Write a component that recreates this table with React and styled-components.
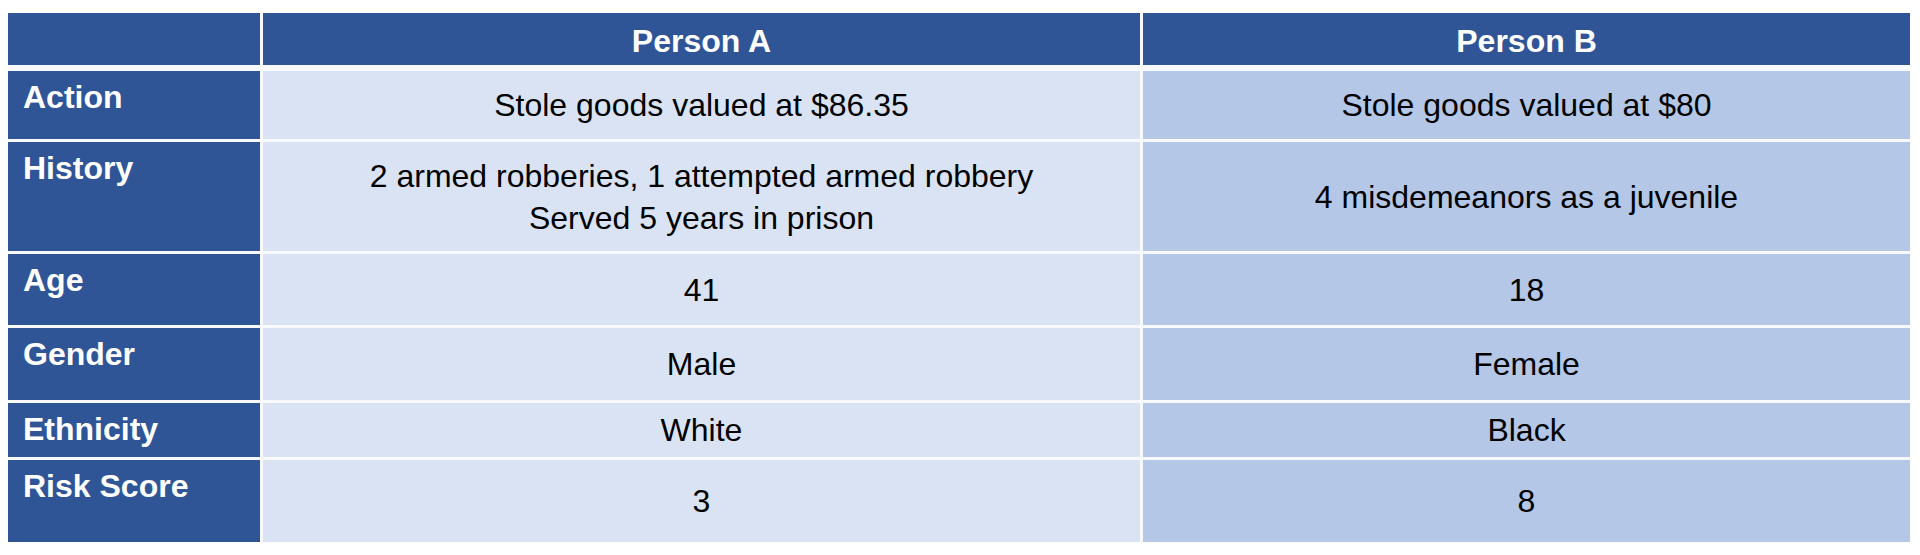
import React from "react";
import styled, { createGlobalStyle } from "styled-components";

const Global = createGlobalStyle`
  html, body { margin: 0; padding: 0; background: #ffffff; }
  body { font-family: "Liberation Sans", Arial, Helvetica, sans-serif; }
`;

const Page = styled.div`
  padding: 13px 10px 13px 8px;
`;

const Table = styled.div`
  width: 1902px;
  display: flex;
  flex-direction: column;
  gap: 6px;
  background: #f7f9fd;
`;

const Grid = styled.div`
  display: grid;
  grid-template-columns: 252px 877px 767px;
  grid-template-rows: ${(p) => p.$rows};
  column-gap: 3px;
  row-gap: 3px;
`;

const HeadCell = styled.div`
  background: #2f5597;
  color: #ffffff;
  font-weight: 700;
  font-size: 32px;
  line-height: 38px;
  text-align: center;
  padding-top: 9px;
  box-sizing: border-box;
`;

const Label = styled.div`
  background: #2f5597;
  color: #ffffff;
  font-weight: 700;
  font-size: 32px;
  line-height: 38px;
  padding: 7px 0 0 15px;
  box-sizing: border-box;
`;

const Cell = styled.div`
  background: ${(p) => (p.$alt ? "#b4c7e7" : "#dae3f3")};
  color: #000000;
  font-size: 32px;
  line-height: 42px;
  display: flex;
  align-items: center;
  justify-content: center;
  text-align: center;
`;

const rows = [
  { label: "Action", a: ["Stole goods valued at $86.35"], b: ["Stole goods valued at $80"], h: 68 },
  {
    label: "History",
    a: ["2 armed robberies, 1 attempted armed robbery", "Served 5 years in prison"],
    b: ["4 misdemeanors as a juvenile"],
    h: 109,
  },
  { label: "Age", a: ["41"], b: ["18"], h: 71 },
  { label: "Gender", a: ["Male"], b: ["Female"], h: 72 },
  { label: "Ethnicity", a: ["White"], b: ["Black"], h: 54 },
  { label: "Risk Score", a: ["3"], b: ["8"], h: 82 },
];

const Lines = ({ lines }) => (
  <div>
    {lines.map((l, i) => (
      <div key={i}>{l}</div>
    ))}
  </div>
);

export default function App() {
  return (
    <>
      <Global />
      <Page>
        <Table>
          <Grid $rows="52px">
            <HeadCell />
            <HeadCell>Person A</HeadCell>
            <HeadCell>Person B</HeadCell>
          </Grid>
          <Grid $rows={rows.map((r) => `${r.h}px`).join(" ")}>
            {rows.map((r) => (
              <React.Fragment key={r.label}>
                <Label>{r.label}</Label>
                <Cell>
                  <Lines lines={r.a} />
                </Cell>
                <Cell $alt>
                  <Lines lines={r.b} />
                </Cell>
              </React.Fragment>
            ))}
          </Grid>
        </Table>
      </Page>
    </>
  );
}
